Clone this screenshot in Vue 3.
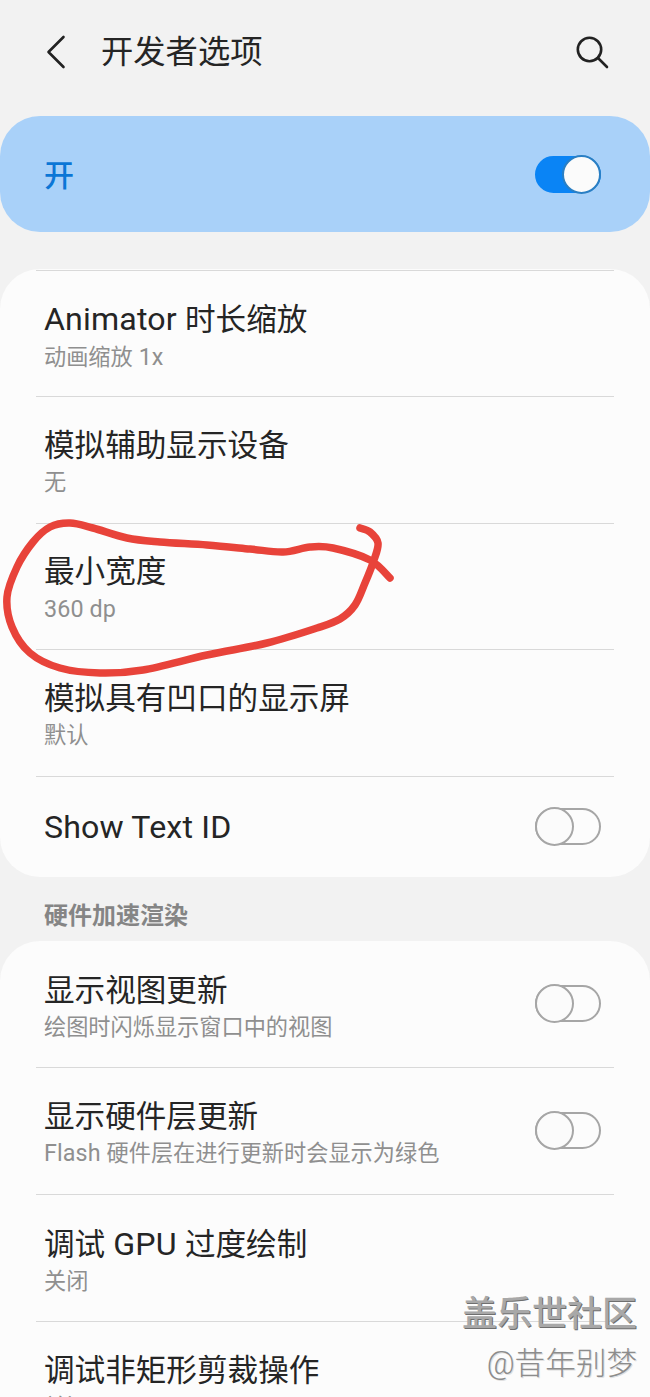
<script setup>
const split = (s) => (s.match(/[\x00-\x7f]+|[^\x00-\x7f]+/g) || []).map((t) => ({ t, lat: /^[\x00-\x7f]/.test(t) }))
const mk = (r) => ({ ...r, titleSegs: split(r.title), subSegs: r.sub ? split(r.sub) : [] })
const group1 = [
  { title: 'Animator 时长缩放', sub: '动画缩放 1x' },
  { title: '模拟辅助显示设备', sub: '无' },
  { title: '最小宽度', sub: '360 dp' },
  { title: '模拟具有凹口的显示屏', sub: '默认' },
  { title: 'Show Text ID', toggle: true, short: true }
].map(mk)
const group2 = [
  { title: '显示视图更新', sub: '绘图时闪烁显示窗口中的视图', toggle: true },
  { title: '显示硬件层更新', sub: 'Flash 硬件层在进行更新时会显示为绿色', toggle: true },
  { title: '调试 GPU 过度绘制', sub: '关闭' },
  { title: '调试非矩形剪裁操作', sub: '关闭' }
].map(mk)
const pts = [[390,578],[370,560],[333,548],[310,547],[283,552],[250,549],[207,545],[160,542],[127,538],[93,528],[70,523],[50,527],[33,542],[17,567],[7,597],[12,627],[30,653],[60,668],[100,673],[143,670],[207,655],[267,643],[317,628],[340,619],[355,605],[365,583],[374,560],[378,543],[370,532],[360,528]]
let d = `M${pts[0][0]} ${pts[0][1]}`
for (let i = 0; i < pts.length - 1; i++) {
  const p0 = pts[Math.max(i - 1, 0)], p1 = pts[i], p2 = pts[i + 1], p3 = pts[Math.min(i + 2, pts.length - 1)]
  const c1x = p1[0] + (p2[0] - p0[0]) / 6, c1y = p1[1] + (p2[1] - p0[1]) / 6
  const c2x = p2[0] - (p3[0] - p1[0]) / 6, c2y = p2[1] - (p3[1] - p1[1]) / 6
  d += ` C${c1x.toFixed(1)} ${c1y.toFixed(1)} ${c2x.toFixed(1)} ${c2y.toFixed(1)} ${p2[0]} ${p2[1]}`
}
const scribble = d
</script>

<template>
  <div class="page">
    <header class="head">
      <svg class="back" width="22" height="36" viewBox="0 0 22 36" fill="none">
        <path d="M18.5 3 L3.5 18 L18.5 33" stroke="#222" stroke-width="2.6" stroke-linecap="round" stroke-linejoin="round" />
      </svg>
      <h1 class="head-title">开发者选项</h1>
      <svg class="search" width="34" height="34" viewBox="0 0 34 34" fill="none">
        <circle cx="14.5" cy="14.5" r="11.7" stroke="#222" stroke-width="2.6" />
        <path d="M23 23 L32 32" stroke="#222" stroke-width="2.6" stroke-linecap="round" />
      </svg>
    </header>

    <section class="master">
      <span class="master-label">开</span>
      <span class="switch on"><i class="knob"></i></span>
    </section>

    <section class="card first">
      <div v-for="r in group1" :key="r.title" class="row" :class="{ short: r.short }">
        <div class="text">
          <div class="title"><span v-for="(s, i) in r.titleSegs" :key="i" :class="{ lat: s.lat }">{{ s.t }}</span></div>
          <div v-if="r.sub" class="sub"><span v-for="(s, i) in r.subSegs" :key="i" :class="{ lat: s.lat }">{{ s.t }}</span></div>
        </div>
        <span v-if="r.toggle" class="switch"><i class="knob"></i></span>
      </div>
    </section>

    <h2 class="section">硬件加速渲染</h2>

    <section class="card second">
      <div v-for="r in group2" :key="r.title" class="row">
        <div class="text">
          <div class="title"><span v-for="(s, i) in r.titleSegs" :key="i" :class="{ lat: s.lat }">{{ s.t }}</span></div>
          <div v-if="r.sub" class="sub"><span v-for="(s, i) in r.subSegs" :key="i" :class="{ lat: s.lat }">{{ s.t }}</span></div>
        </div>
        <span v-if="r.toggle" class="switch"><i class="knob"></i></span>
      </div>
    </section>

    <svg class="scribble" width="650" height="700" viewBox="0 0 650 700" fill="none">
      <path :d="scribble" stroke="#e8433a" stroke-width="7.5" stroke-linecap="round" stroke-linejoin="round" />
    </svg>

    <div class="mark">
      <div class="mark-a">盖乐世社区</div>
      <div class="mark-b">@昔年别梦</div>
    </div>
  </div>
</template>

<style>
html, body { margin: 0; background: #f2f2f2; }
</style>

<style scoped>
.page {
  position: relative;
  width: 650px;
  height: 1397px;
  overflow: hidden;
  background: #f2f2f2;
  font-family: Roboto, "Noto Sans CJK SC", sans-serif;
  color: #252525;
}
.head {
  height: 116px;
  box-sizing: border-box;
  padding: 0 41px 12px 45px;
  display: flex;
  align-items: center;
}
.back { flex: none; }
.head-title {
  margin: 0 0 0 34px;
  flex: 1;
  font-size: 32.3px;
  font-weight: 400;
  line-height: 44px;
}
.search { flex: none; }
.master {
  height: 116px;
  box-sizing: border-box;
  padding: 0 49px 0 44px;
  display: flex;
  align-items: center;
  justify-content: space-between;
  background: #a9d1f9;
  border-radius: 40px;
}
.master-label {
  padding-top: 3px;
  font-size: 30px;
  font-weight: 500;
  color: #0b76d6;
  line-height: 40px;
}
.switch {
  position: relative;
  flex: none;
  display: block;
  width: 66px;
  height: 37px;
  box-sizing: border-box;
  border: 2px solid #a6a6a6;
  border-radius: 19px;
}
.knob {
  position: absolute;
  left: -2px;
  top: -3px;
  width: 39px;
  height: 39px;
  box-sizing: border-box;
  border: 2px solid #a6a6a6;
  border-radius: 50%;
  background: #fbfbfb;
}
.switch.on {
  background: #0a84f5;
  border-color: #0a84f5;
}
.switch.on .knob {
  left: 25px;
  border-color: #2a7fc4;
}
.card {
  background: #fcfcfc;
  border-radius: 40px;
  overflow: hidden;
}
.first { margin-top: 37px; }
.row {
  position: relative;
  box-sizing: border-box;
  height: 126.5px;
  padding: 29px 49px 0 44px;
  display: flex;
  align-items: flex-start;
  justify-content: space-between;
}
.row::before {
  content: "";
  position: absolute;
  left: 36px;
  right: 36px;
  top: 0.5px;
  height: 1px;
  background: #d9d9d9;
}
.row.short {
  height: 102px;
  padding-top: 0;
  align-items: center;
}
.row.short .text { padding-top: 3px; }
.second .row {
  height: 126.7px;
  padding-top: 29px;
}
.second .row::before { top: 0; }
.second .row:first-child::before { display: none; }
.second .row .switch { margin-top: 15.5px; }
.second .sub { margin-top: 1px; }
.title {
  font-size: 30.6px;
  line-height: 42px;
  color: #252525;
}
.sub {
  margin-top: 1.5px;
  font-size: 22.2px;
  line-height: 28px;
  color: #8f8f8f;
}
.lat {
  font-size: 1.05em;
  letter-spacing: 0.005em;
}
.section {
  margin: 0;
  height: 63.5px;
  box-sizing: border-box;
  padding: 23px 0 0 44px;
  font-size: 24px;
  line-height: 32px;
  font-weight: 700;
  color: #858585;
}
.scribble {
  position: absolute;
  left: 0;
  top: 0;
  pointer-events: none;
}
.mark {
  position: absolute;
  right: 13px;
  top: 1292px;
  text-align: right;
}
.mark-a {
  font-size: 35px;
  line-height: 46px;
  font-weight: 500;
  color: #a8a8a8;
  text-shadow: 1px 1px 0 #6f6f6f;
}
.mark-b {
  margin-top: 6px;
  font-size: 30.6px;
  line-height: 40px;
  font-weight: 300;
  color: #8c8c8c;
  text-shadow: 1px 1px 0 #e0e0e0;
}
</style>
